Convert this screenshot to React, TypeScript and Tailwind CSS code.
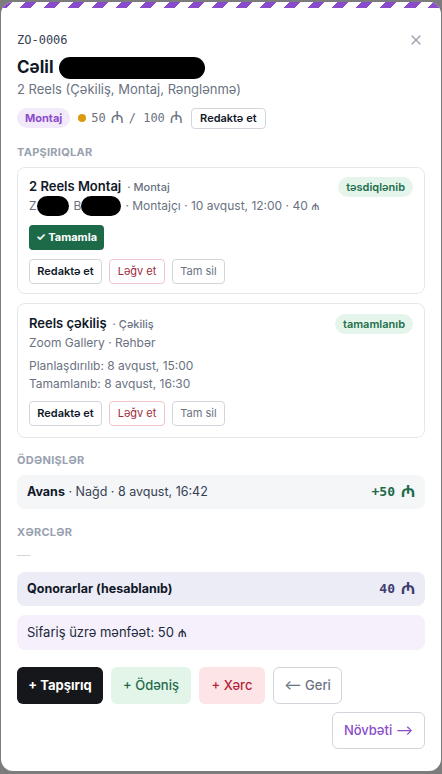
import { X } from 'lucide-react'

const sans = "font-['Inter','Noto_Sans',sans-serif]"
const mono = "font-['DejaVu_Sans_Mono','Liberation_Mono',monospace]"
const manatFont = "font-['DejaVu_Sans','Noto_Sans',sans-serif]"

function Blob({ w }: { w: string }) {
  return <span className={`inline-block ${w} h-[20px] -my-[1px] bg-black rounded-full`} />
}

function Manat({ bold = false }: { bold?: boolean }) {
  return (
    <span className={`text-[16px] leading-none ${bold ? 'font-bold' : 'font-normal'} ${manatFont}`}>₼</span>
  )
}

function SectionTitle({ children, className = '' }: { children: React.ReactNode; className?: string }) {
  return (
    <div className={`text-[11px] leading-4 font-bold tracking-wide uppercase text-gray-400 ${className}`}>
      {children}
    </div>
  )
}

function CardActions() {
  return (
    <div className="flex gap-[7px] text-[11px] h-[25px]">
      <button className="h-[25px] w-[73px] rounded border border-gray-300 font-semibold text-gray-900 bg-white">
        Redaktə et
      </button>
      <button className="h-[25px] w-[56px] rounded border border-[#efc6cb] text-[#9d2b3b] bg-white">
        Ləğv et
      </button>
      <button className="h-[25px] w-[53px] rounded border border-gray-300 text-gray-500 bg-white">
        Tam sil
      </button>
    </div>
  )
}

function StatusBadge({ label }: { label: string }) {
  return (
    <span className="h-5 px-2 rounded-full bg-[#e5f5ec] text-[#1e6f4b] text-[11px] font-semibold leading-5">
      {label}
    </span>
  )
}

function CardTitle({ title, kind, status }: { title: string; kind: string; status: string }) {
  return (
    <div className="h-5 flex items-center justify-between">
      <div className="flex items-baseline">
        <span className="text-[13px] font-semibold text-gray-900">{title}</span>
        <span className="ml-[6px] text-[11px] font-medium text-gray-500">· {kind}</span>
      </div>
      <StatusBadge label={status} />
    </div>
  )
}

export default function App() {
  return (
    <div className={`min-h-[774px] bg-[#7c7c7c] pt-[2px] pl-px ${sans}`}>
      <div className="w-[440px] h-[769px] bg-white rounded-xl overflow-hidden flex flex-col">
        {/* striped top edge */}
        <div className="h-[6px] shrink-0 bg-[repeating-linear-gradient(135deg,#8a4ccb_0_8px,#ffffff_8px_17px)]" />

        <div className="px-4 pt-6 pb-[23px] flex flex-col">
          {/* Header */}
          <div className="h-4 flex items-center justify-between">
            <span className={`text-[12px] leading-4 text-gray-700 ${mono}`}>ZO-0006</span>
            <X className="w-4 h-4 text-gray-400 mr-[1px]" strokeWidth={2} />
          </div>
          <div className="mt-2 h-6 text-[17px] font-bold text-gray-900 flex items-center gap-[5px]">
            Cəlil
            <span className="inline-block w-[146px] h-[22px] bg-black rounded-full" />
          </div>
          <div className="h-[18px] text-[13px] leading-[18px] text-gray-500">2 Reels (Çəkiliş, Montaj, Rənglənmə)</div>

          <div className="mt-2 h-6 flex items-center">
            <span className="h-5 px-2 rounded-full bg-[#f2e9fb] text-[#8a4ccb] text-[11px] font-bold leading-5">
              Montaj
            </span>
            <span className="ml-[8px] w-2 h-2 rounded-full bg-[#dd9a0e]" />
            <span className={`ml-[5px] text-[12px] text-gray-500 flex items-center gap-[5px] ${mono}`}>
              50 <Manat /> / 100 <Manat />
            </span>
            <button className="ml-[8px] h-[21px] w-[75px] rounded border border-gray-300 text-[11px] font-semibold text-gray-900 bg-white">
              Redaktə et
            </button>
          </div>

          {/* Tasks */}
          <SectionTitle className="mt-[14px]">Tapşırıqlar</SectionTitle>
          <div className="mt-[7px] flex flex-col gap-[9px]">
            <div className="rounded-lg border border-gray-200 px-[11px] pt-[9px] pb-[9px]">
              <CardTitle title="2 Reels Montaj" kind="Montaj" status="təsdiqlənib" />
              <div className="h-[18px] text-[12px] text-gray-500 flex items-center">
                Z<Blob w="w-[32px]" />
                <span className="ml-[5px]">B</span>
                <Blob w="w-[40px]" />
                <span className="ml-[4px]">· Montajçı · 10 avqust, 12:00 · 40 ₼</span>
              </div>
              <button className="mt-[10px] h-[25px] w-[75px] rounded bg-[#1d6a49] text-white text-[11px] font-bold">
                ✓ Tamamla
              </button>
              <div className="mt-[9px]">
                <CardActions />
              </div>
            </div>

            <div className="rounded-lg border border-gray-200 px-[11px] pt-[10px] pb-[11px]">
              <CardTitle title="Reels çəkiliş" kind="Çəkiliş" status="tamamlanıb" />
              <div className="h-[18px] text-[12px] leading-[18px] text-gray-500">Zoom Gallery · Rəhbər</div>
              <div className="mt-[5px] text-[12px] leading-[18px] text-gray-500">
                <div>Planlaşdırılıb: 8 avqust, 15:00</div>
                <div>Tamamlanıb: 8 avqust, 16:30</div>
              </div>
              <div className="mt-2">
                <CardActions />
              </div>
            </div>
          </div>

          {/* Payments */}
          <SectionTitle className="mt-[14px]">Ödənişlər</SectionTitle>
          <div className="mt-[7px] h-[34px] rounded-lg bg-[#f4f6f8] px-[10px] flex items-center justify-between text-[12.5px]">
            <span className="text-gray-700">
              <span className="font-bold text-gray-900">Avans</span> · Nağd · 8 avqust, 16:42
            </span>
            <span className={`font-bold text-[13px] text-[#1d6a49] flex items-center gap-[6px] ${mono}`}>
              +50 <Manat bold />
            </span>
          </div>

          {/* Expenses */}
          <SectionTitle className="mt-[15px]">Xərclər</SectionTitle>
          <div className="mt-[7px] h-4 text-[13px] leading-4 text-gray-300">—</div>
          <div className="mt-[9px] h-[34px] rounded-lg bg-[#ececf7] px-[10px] flex items-center justify-between text-[12.5px]">
            <span className="font-bold text-gray-900">Qonorarlar (hesablanıb)</span>
            <span className={`font-bold text-[13px] text-[#3d3d6e] flex items-center gap-[6px] ${mono}`}>
              40 <Manat bold />
            </span>
          </div>
          <div className="mt-[9px] h-[35px] rounded-lg bg-[#f5f0fc] px-[10px] flex items-center text-[13px] text-gray-800">
            Sifariş üzrə mənfəət: 50 ₼
          </div>

          {/* Footer actions */}
          <div className="mt-[17px] flex gap-2 text-[13px]">
            <button className="h-[37px] w-[86px] rounded-md bg-[#16171a] text-white font-bold">+ Tapşırıq</button>
            <button className="h-[37px] w-[80px] rounded-md bg-[#e3f4e9] text-[#1d6a49] font-medium">+ Ödəniş</button>
            <button className="h-[37px] w-[66px] rounded-md bg-[#fde4e6] text-[#b3243b] font-medium">+ Xərc</button>
            <button className="h-[37px] w-[69px] rounded-md border border-gray-300 bg-white text-gray-500 font-medium">
              ⟵ Geri
            </button>
          </div>
          <div className="mt-2 flex justify-end">
            <button className="h-[37px] w-[93px] rounded-md border border-gray-300 bg-white text-[#8a4ccb] text-[13px] font-medium">
              Növbəti ⟶
            </button>
          </div>
        </div>
      </div>
    </div>
  )
}
